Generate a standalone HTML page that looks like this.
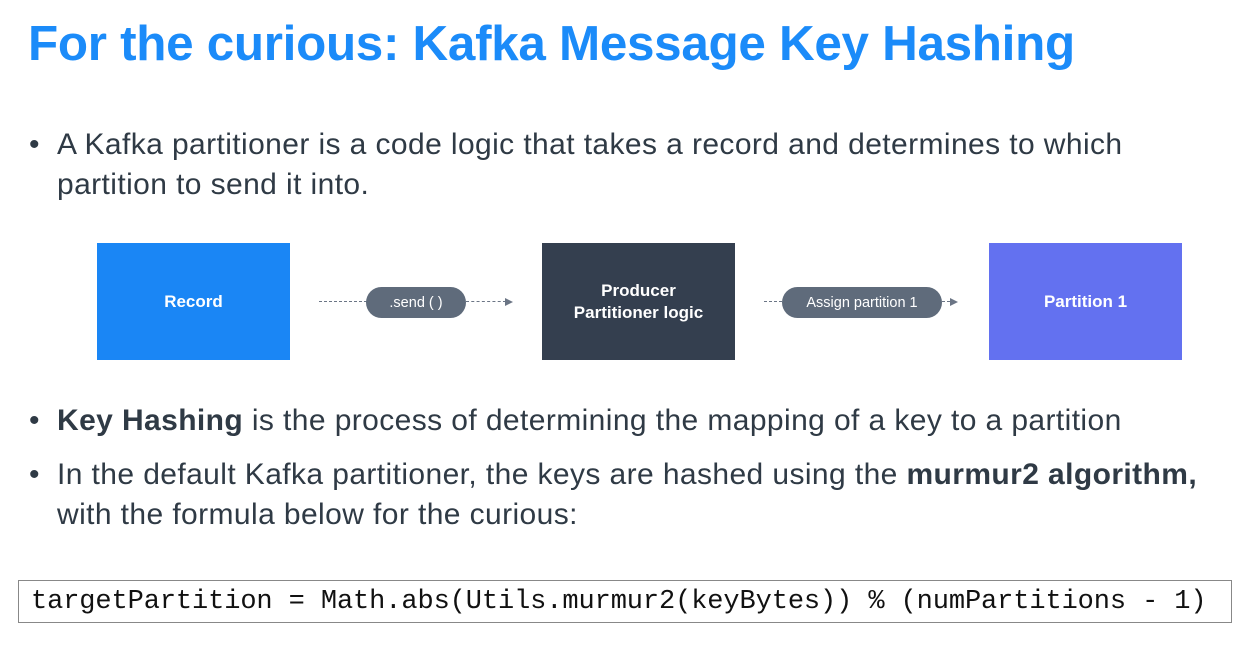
<!DOCTYPE html>
<html><head><style>
body{margin:0;width:1254px;height:662px;background:#fff;position:relative;overflow:hidden;font-family:"Liberation Sans",sans-serif;color:#2f3a45}
h1{position:absolute;left:28px;top:15px;margin:0;font-size:49.4px;font-weight:bold;color:#1b8bf9;white-space:nowrap;letter-spacing:-0.3px}
.t{position:absolute;font-size:30px;letter-spacing:0.4px;white-space:nowrap;line-height:40px}
.dot{position:absolute;left:29px;font-size:30px;line-height:40px}
.box{position:absolute;top:243px;width:193px;height:117px;color:#fff;font-weight:bold;font-size:17px;display:flex;align-items:center;justify-content:center;text-align:center;line-height:22px}
.pill{position:absolute;top:287px;height:31px;border-radius:16px;background:#5f6b7b;color:#fff;font-size:14.5px;display:flex;align-items:center;justify-content:center}
.dash{position:absolute;top:301px;border-top:1.5px dashed #6b7585;height:0}
.arr{position:absolute;width:0;height:0;border-left:8px solid #6b7585;border-top:4px solid transparent;border-bottom:4px solid transparent}
.code{position:absolute;left:18px;top:580px;width:1214px;height:43px;border:1.5px solid #888;font-family:"Liberation Mono",monospace;font-size:27px;letter-spacing:-0.1px;line-height:42px;color:#111;padding-left:12px;box-sizing:border-box;white-space:nowrap}
</style></head><body>
<h1>For the curious: Kafka Message Key Hashing</h1>
<div class="dot" style="top:125px">•</div>
<div class="t" style="left:57px;top:125px">A Kafka partitioner is a code logic that takes a record and determines to which</div>
<div class="t" style="left:57px;top:165px">partition to send it into.</div>

<div class="box" style="left:97px;background:#1a86f5">Record</div>
<div class="dash" style="left:319px;width:48px"></div>
<div class="pill" style="left:366px;width:100px">.send ( )</div>
<div class="dash" style="left:466px;width:40px"></div>
<div class="arr" style="left:505px;top:298px"></div>
<div class="box" style="left:542px;background:#343f4f">Producer<br>Partitioner logic</div>
<div class="dash" style="left:764px;width:18px"></div>
<div class="pill" style="left:782px;width:160px">Assign partition 1</div>
<div class="dash" style="left:942px;width:8px"></div>
<div class="arr" style="left:950px;top:298px"></div>
<div class="box" style="left:989px;background:#6371f0">Partition 1</div>

<div class="dot" style="top:401px">•</div>
<div class="t" style="left:57px;top:401px"><b>Key Hashing</b> is the process of determining the mapping of a key to a partition</div>
<div class="dot" style="top:455px">•</div>
<div class="t" style="left:57px;top:455px">In the default Kafka partitioner, the keys are hashed using the <b>murmur2 algorithm,</b></div>
<div class="t" style="left:57px;top:495px">with the formula below for the curious:</div>

<div class="code">targetPartition = Math.abs(Utils.murmur2(keyBytes)) % (numPartitions - 1)</div>
</body></html>
